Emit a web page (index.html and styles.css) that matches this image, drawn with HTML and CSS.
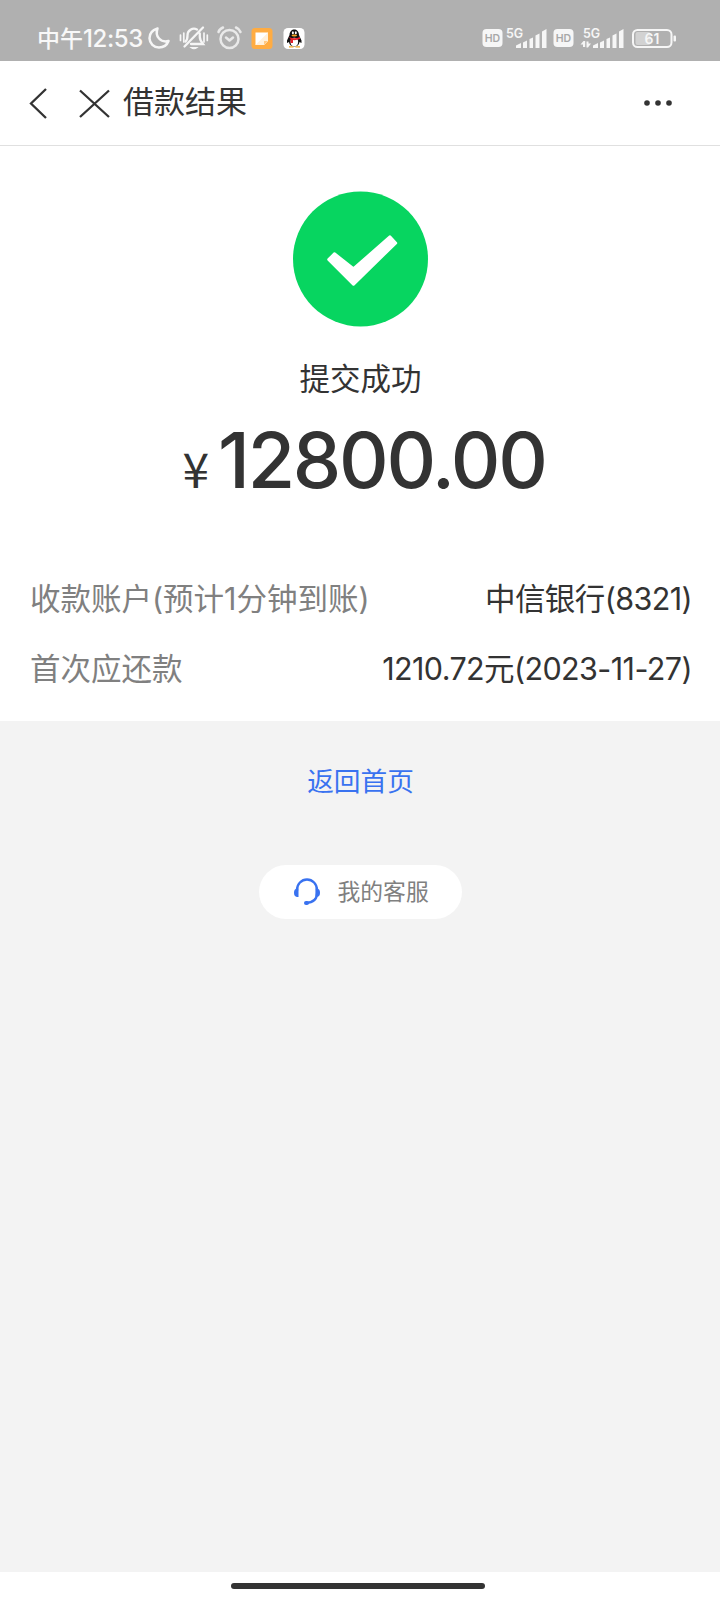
FILE: index.html
```html
<!DOCTYPE html>
<html lang="zh-CN">
<head>
    <meta charset="UTF-8">
    <meta name="viewport" content="width=device-width, initial-scale=1.0">
    <title>借款结果</title>
    <link rel="stylesheet" href="styles.css">
</head>
<body>
    <div class="status-bar">
        <span class="time">中午<span class="clock">12:53</span></span>
        <svg class="status-left" width="160" height="28" viewBox="0 0 160 28">
            <!-- moon -->
            <path d="M9.500 4.500C4.500 6 1.500 9.500 1.500 14.200A9.500 9.500 0 0 0 11 23.500C15.500 23.500 19 21 20.500 17C13 19 6.500 12.500 9.500 4.500Z" fill="none" stroke="#f6f6f6" stroke-width="2.500" stroke-linejoin="round"/>
            <!-- muted bell -->
            <g fill="none" stroke="#f6f6f6" stroke-width="2.300" stroke-linecap="round">
                <path d="M37.500 17.500C39.500 16 39.500 14 39.500 11.500A6.500 6.500 0 0 1 49 5.500M51.800 9.500V13C51.800 16 53 17.500 55 20H43M55 3.500L36.500 22.500"/>
                <path d="M43 23.500H49Q46 26 43 23.500Z" stroke-width="1.200" fill="#f6f6f6"/>
                <path d="M32.500 11V16.500M35.800 9V18M56 9V18M59.300 11V16.500" stroke-width="1.700"/>
            </g>
            <!-- alarm -->
            <g fill="none" stroke="#e9e9e9" stroke-width="2.500" stroke-linecap="round" stroke-linejoin="round">
                <circle cx="81.500" cy="15" r="9"/>
                <path d="M78 13.500L81.500 16.500L85 13.500M70.500 8Q71.500 5 75 3.500M88 3.500Q91.500 5 92.500 8"/>
            </g>
            <!-- notes app -->
            <rect x="103.500" y="4" width="21" height="21" rx="3.500" fill="#ffac42"/>
            <path d="M107.500 8.500H120V17L116 21H107.500Z" fill="#fff"/>
            <path d="M107.500 21L120 8.500V17L116 21Z" fill="#fff0db"/>
            <path d="M116 21L120 17H116Z" fill="#ffc983"/>
            <!-- penguin -->
            <rect x="135.500" y="4" width="21" height="21" rx="4.500" fill="#fff"/>
            <path d="M141.500 11C141.500 3.500 151 3.500 151 11L153.500 16.500V19L151.500 18C151 24 141.500 24 141 18L139 19V16.500Z" fill="#111"/>
            <ellipse cx="146.300" cy="18" rx="3.800" ry="4.200" fill="#fff"/>
            <ellipse cx="144.900" cy="8.700" rx="1" ry="1.500" fill="#fff"/>
            <ellipse cx="147.800" cy="8.700" rx="1" ry="1.500" fill="#fff"/>
            <ellipse cx="146.300" cy="11.600" rx="2.800" ry="1" fill="#f5a623"/>
            <path d="M141 13Q146.500 15.500 152 13V15Q148 16.500 145 16V19H142.500V15Z" fill="#e6202a"/>
            <path d="M141 22.300H145.500V23.500H141ZM147.500 22.300H152V23.500H147.500Z" fill="#f5a623"/>
        </svg>
        <svg class="status-right" width="196" height="28" viewBox="0 0 196 28">
            <g fill="#f6f6f6">
                <rect x="0.500" y="5" width="20" height="18" rx="4"/>
                <rect x="71.500" y="5" width="20" height="18" rx="4"/>
                <path d="M34 24V21.500L39 19V24ZM41 18.500L45 16.500V24H41ZM47.500 15L51 13.500V24H47.500ZM53.500 11.500L57.500 9.500V24H53.500ZM60 7.500L64.500 5V24H60Z"/>
                <path d="M111 24V21.500L116 19V24ZM118 18.500L122 16.500V24H118ZM124.500 15L128 13.500V24H124.500ZM130.500 11.500L134.500 9.500V24H130.500ZM137 7.500L141.500 5V24H137Z"/>
                <path d="M98.500 20.500L101.500 17H103.200V23H101V20.500ZM104.500 17.500H106.500V19.500H109L106 23.500H104.500Z"/>
                <rect x="191.500" y="11.500" width="2.500" height="6" rx="1"/>
            </g>
            <rect x="153.500" y="8" width="15" height="13" rx="2" fill="#d2d2d2"/>
            <rect x="151" y="6" width="38.500" height="17" rx="4.500" fill="none" stroke="#f6f6f6" stroke-width="2"/>
            <g class="status-text">
                <text x="10.500" y="18" fill="#a8a8a8" font-size="10.500">HD</text>
                <text x="81.500" y="18" fill="#a8a8a8" font-size="10.500">HD</text>
                <text x="32.500" y="13.500" fill="#f6f6f6" font-size="12.500">5G</text>
                <text x="109.500" y="13.500" fill="#f6f6f6" font-size="12.500">5G</text>
                <text x="170" y="19.500" fill="#f6f6f6" font-size="14">61</text>
            </g>
        </svg>
    </div>

    <div class="header">
        <svg class="nav-icons" width="84" height="32" viewBox="0 0 84 32">
            <path d="M20 2L5 16.500L20 31M54 3.500L83 30M83 3.500L54 30" fill="none" stroke="#333" stroke-width="2.300"/>
        </svg>
        <h1>借款结果</h1>
        <svg class="more" width="30" height="8" viewBox="0 0 30 8">
            <g fill="#333">
                <circle cx="4" cy="4" r="2.800"/>
                <circle cx="15" cy="4" r="2.800"/>
                <circle cx="26" cy="4" r="2.800"/>
            </g>
        </svg>
    </div>

    <div class="result">
        <svg class="success" width="136" height="136" viewBox="0 0 136 136">
            <circle cx="68.500" cy="68" r="67.500" fill="#07d560"/>
            <path d="M42.500 62.500L61.500 77.500L98 45.500L104 52L61.500 93.500L36.500 68.500Z" fill="#fff" stroke="#fff" stroke-width="2.500" stroke-linejoin="round"/>
        </svg>
        <div class="result-text">提交成功</div>
        <div class="amount"><span class="currency">¥</span><span class="number">12800.00</span></div>
        <div class="details">
            <div class="row">
                <span class="label">收款账户(预计1分钟到账)</span>
                <span class="value">中信银行(8321)</span>
            </div>
            <div class="row">
                <span class="label">首次应还款</span>
                <span class="value">1210.72元(2023-11-27)</span>
            </div>
        </div>
    </div>

    <div class="footer">
        <a class="home-link">返回首页</a>
        <div class="service">
            <svg width="28" height="28" viewBox="0 0 28 28">
                <path d="M4 13V12A10 10.500 0 0 1 24 12V15C24 21 20.500 24.500 13 25" fill="none" stroke="#3972f0" stroke-width="2.300"/>
                <path d="M5.500 10.500V19H4Q1 18.500 1 14.800Q1 11 4 10.500ZM22.500 10.500H24Q27 11 27 14.800Q27 18.500 24 19H22.500Z" fill="#3972f0"/>
                <rect x="11" y="23" width="5" height="4" rx="2" fill="#3972f0"/>
            </svg>
            <span>我的客服</span>
        </div>
    </div>

    <div class="gesture-bar">
        <div class="gesture-line"></div>
    </div>
</body>
</html>
```
FILE: styles.css
```css
* {
    box-sizing: border-box;
}
body {
    margin: 0;
    height: 1600px;
    display: flex;
    flex-direction: column;
    background: #f3f3f3;
    color: #333;
    font-family: Inter, "Noto Sans CJK SC", sans-serif;
}
svg {
    display: block;
    flex-shrink: 0;
}
.status-bar {
    height: 61px;
    padding: 15px 42px 0 37px;
    display: flex;
    align-items: flex-start;
    background: #b0b0b0;
    color: #f8f8f8;
}
.time {
    width: 111px;
    font-size: 23px;
    line-height: 48px;
    height: 48px;
    white-space: nowrap;
    font-weight: 500;
}
.clock {
    font-size: 24px;
    letter-spacing: -0.4px;
}
.status-right {
    margin-left: auto;
}
.status-left,
.status-right {
    margin-top: 9px;
}
.status-text {
    font-family: Inter, sans-serif;
    font-weight: 600;
    text-anchor: middle;
}
.header {
    height: 85px;
    padding: 0 47px 0 26px;
    display: flex;
    align-items: center;
    background: #fff;
    border-bottom: 1px solid #e0e0e0;
}
.header h1 {
    margin: -2px 0 0 13px;
    font-size: 31px;
    font-weight: 400;
    line-height: 40px;
}
.more {
    margin-left: auto;
}
.result {
    height: 575px;
    padding-top: 45px;
    display: flex;
    flex-direction: column;
    align-items: center;
    background: #fff;
}
.result-text {
    margin-top: 31px;
    padding-left: 1px;
    font-size: 30.500px;
    line-height: 42px;
}
.amount {
    margin-top: 15px;
    padding-left: 8px;
    height: 90px;
    line-height: 90px;
    display: flex;
    align-items: baseline;
}
.currency {
    margin-right: 9px;
    font-family: "Noto Sans CJK SC", sans-serif;
    font-size: 48px;
}
.number {
    font-size: 77px;
    font-weight: 500;
    letter-spacing: -2.300px;
}
.details {
    width: 100%;
    margin-top: 71px;
    padding: 0 28px 0 30px;
}
.row {
    height: 70px;
    line-height: 46px;
    display: flex;
    justify-content: space-between;
    font-size: 30.500px;
}
.label {
    color: #808080;
}
.value {
    letter-spacing: -0.600px;
}
.footer {
    flex: 1;
    display: flex;
    flex-direction: column;
    align-items: center;
}
.home-link {
    margin-top: 40px;
    padding-left: 1px;
    font-size: 26.700px;
    line-height: 40px;
    color: #3972f0;
}
.service {
    width: 203px;
    height: 54px;
    margin-top: 64px;
    padding-left: 34px;
    display: flex;
    align-items: center;
    gap: 17px;
    border-radius: 27px;
    background: #fff;
    color: #808080;
    font-size: 22.800px;
    line-height: 32px;
}
.gesture-bar {
    height: 28px;
    padding: 11px 0 0 231px;
    background: #fff;
}
.gesture-line {
    width: 254px;
    height: 6px;
    border-radius: 3px;
    background: #333;
}
```
